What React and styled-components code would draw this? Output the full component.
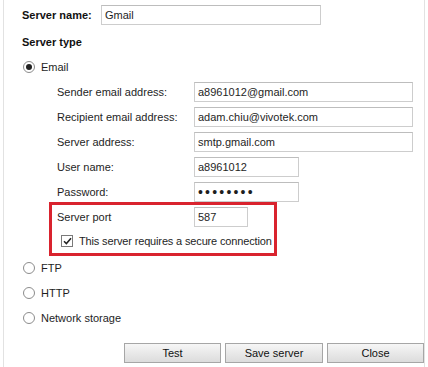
import React from "react";
import styled, { createGlobalStyle } from "styled-components";

const GlobalStyle = createGlobalStyle`
  body {
    margin: 0;
    background: #fff;
    font-family: "Liberation Sans", Arial, sans-serif;
    font-size: 11px;
    color: #1e1e1e;
  }
`;

const Panel = styled.div`
  box-sizing: border-box;
  width: 422px;
  height: 367px;
  margin-left: 3px;
  padding: 2px 0 0 18px;
  border-left: 1px solid #e2e2e2;
  border-right: 1px solid #e2e2e2;
  white-space: nowrap;
`;

const Row = styled.div`
  display: flex;
  align-items: center;
  height: ${({ h }) => h || 25}px;
  margin-top: ${({ mt }) => mt || 0}px;
  padding-left: ${({ indent }) => indent || 0}px;
  letter-spacing: ${({ tight }) => (tight ? "-0.15px" : "normal")};
`;

const Strong = styled.span`
  font-weight: 700;
  color: #111;
  flex-shrink: 0;
  width: ${({ w }) => (w ? `${w}px` : "auto")};
`;

const Label = styled.span`
  width: 137px;
  flex-shrink: 0;
`;

const Input = styled.input`
  box-sizing: border-box;
  width: ${({ w }) => w}px;
  height: 20px;
  margin: 0;
  padding: 0 3px;
  border: 1px solid #cdcdcd;
  border-top-color: #bdbdbd;
  background: #fff;
  font-family: "Liberation Sans", Arial, sans-serif;
  font-size: ${({ type }) => (type === "password" ? "14px" : "11px")};
  color: #1e1e1e;
  outline: none;
  letter-spacing: ${({ type }) => (type === "password" ? "2.2px" : "normal")};
`;

const Radio = styled.span`
  box-sizing: border-box;
  width: 12px;
  height: 12px;
  margin: 0 6px 0 1px;
  border: 1px solid #8c8c8c;
  border-radius: 50%;
  background: #fff;
  display: flex;
  align-items: center;
  justify-content: center;

  &::after {
    content: "";
    width: 6px;
    height: 6px;
    border-radius: 50%;
    background: #222;
    display: ${({ checked }) => (checked ? "block" : "none")};
  }
`;

const Highlight = styled.div`
  box-sizing: border-box;
  width: 228px;
  height: 54px;
  margin: -2px 0 0 27px;
  padding-left: 5px;
  border: 3px solid #d9232e;
`;

const Check = styled.span`
  box-sizing: border-box;
  width: 12px;
  height: 12px;
  margin: 0 6px 0 4px;
  border: 1px solid #7a7a7a;
  background: #fff;
  display: flex;
  align-items: center;
  justify-content: center;
`;

const Buttons = styled.div`
  display: flex;
  justify-content: flex-end;
  gap: 4px;
  margin-top: 13px;
`;

const Button = styled.button`
  box-sizing: border-box;
  width: ${({ w }) => w || 97}px;
  height: 20px;
  margin: 0;
  padding: 0;
  border: 1px solid #a6a6a6;
  background: linear-gradient(#f6f6f6, #dcdcdc);
  font-family: "Liberation Sans", Arial, sans-serif;
  font-size: 11px;
  color: #111;
`;

const Field = ({ label, value, w, type }) => (
  <Row indent={35}>
    <Label>{label}</Label>
    <Input w={w} type={type} value={value} readOnly />
  </Row>
);

export default function App() {
  return (
    <>
      <GlobalStyle />
      <Panel>
        <Row>
          <Strong w={79}>Server name:</Strong>
          <Input w={220} value="Gmail" readOnly />
        </Row>
        <Row mt={2}>
          <Strong>Server type</Strong>
        </Row>
        <Row>
          <Radio checked />
          Email
        </Row>
        <Field label="Sender email address:" value="a8961012@gmail.com" w={219} />
        <Field label="Recipient email address:" value="adam.chiu@vivotek.com" w={219} />
        <Field label="Server address:" value="smtp.gmail.com" w={219} />
        <Field label="User name:" value="a8961012" w={105} />
        <Field label="Password:" value="12345678" w={105} type="password" />
        <Highlight>
          <Row h={24}>
            <Label>Server port</Label>
            <Input w={54} value="587" readOnly />
          </Row>
          <Row h={24} tight>
            <Check>
              <svg width="9" height="8" viewBox="0 0 9 8">
                <path d="M1 4.2 L3.4 6.6 L8 1.2" fill="none" stroke="#222" strokeWidth="1.5" />
              </svg>
            </Check>
            This server requires a secure connection
          </Row>
        </Highlight>
        <Row mt={-1}>
          <Radio />
          FTP
        </Row>
        <Row>
          <Radio />
          HTTP
        </Row>
        <Row>
          <Radio />
          Network storage
        </Row>
        <Buttons>
          <Button>Test</Button>
          <Button w={98}>Save server</Button>
          <Button>Close</Button>
        </Buttons>
      </Panel>
    </>
  );
}
